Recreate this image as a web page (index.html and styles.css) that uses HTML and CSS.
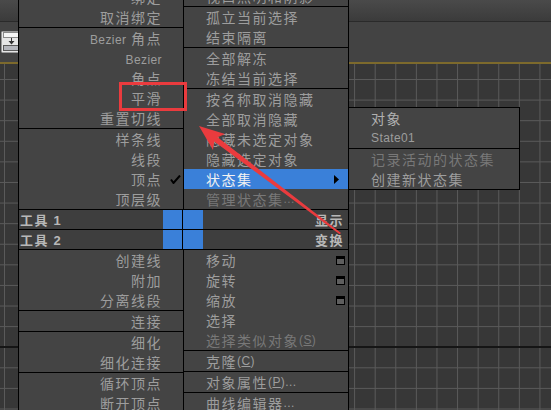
FILE: index.html
```html
<!DOCTYPE html>
<html lang="zh-CN">
<head>
<meta charset="UTF-8">
<meta name="viewport" content="width=device-width, initial-scale=1.0">
<title>四元菜单</title>
<link rel="stylesheet" href="styles.css">
</head>
<body>
  <!-- 视口背景 -->
  <div class="viewport">
    <div class="toolbar"></div>
    <div class="panel">
      <svg class="drop-icon" width="20" height="22" viewBox="0 0 20 22">
        <rect x="0.5" y="0.5" width="19" height="21" rx="1" fill="#e6e6e6" stroke="#9a9a9a"/>
        <rect x="2.5" y="1.5" width="16" height="5" fill="#f6f6f6" stroke="#8a8a8a"/>
        <rect x="2.5" y="14.5" width="16" height="5" fill="#b4b6bc" stroke="#5a5a5a"/>
        <rect x="10" y="7" width="1" height="4" fill="#333"/>
        <polygon points="7.5,10 13.5,10 10.5,13.5" fill="#333"/>
      </svg>
    </div>
    <div class="gold"></div>
    <div class="grid"></div>
  </div>

  <!-- 四元菜单 -->
  <div class="quad">
    <div class="quad-top">
      <div class="col col-left">
        <div class="group">
          <div class="item"><span class="txt">绑定</span><span class="slot"></span></div>
          <div class="item"><span class="txt">取消绑定</span><span class="slot"></span></div>
        </div>
        <div class="group">
          <div class="item"><span class="txt"><span class="lat">Bezier</span> 角点</span><span class="slot"></span></div>
          <div class="item"><span class="txt"><span class="lat">Bezier</span></span><span class="slot"></span></div>
          <div class="item"><span class="txt">角点</span><span class="slot"></span></div>
          <div class="item"><span class="txt">平滑</span><span class="slot"></span></div>
          <div class="item"><span class="txt">重置切线</span><span class="slot"></span></div>
        </div>
        <div class="group">
          <div class="item"><span class="txt">样条线</span><span class="slot"></span></div>
          <div class="item"><span class="txt">线段</span><span class="slot"></span></div>
          <div class="item">
            <span class="txt">顶点</span>
            <span class="slot">
              <svg class="check" width="11" height="9" viewBox="0 0 11 9"><path d="M1 4.5 L3.5 8 L10 0.5" fill="none" stroke="#000" stroke-width="2"/></svg>
            </span>
          </div>
          <div class="item"><span class="txt">顶层级</span><span class="slot"></span></div>
        </div>
      </div>
      <div class="col col-right">
        <div class="group">
          <div class="item">视口照明和阴影</div>
        </div>
        <div class="group">
          <div class="item">孤立当前选择</div>
          <div class="item">结束隔离</div>
        </div>
        <div class="group">
          <div class="item">全部解冻</div>
          <div class="item">冻结当前选择</div>
        </div>
        <div class="group">
          <div class="item">按名称取消隐藏</div>
          <div class="item">全部取消隐藏</div>
          <div class="item">隐藏未选定对象</div>
          <div class="item">隐藏选定对象</div>
          <div class="item active">状态集
            <svg class="sub-arrow" width="5" height="9" viewBox="0 0 5 9"><polygon points="0,0 5,4.5 0,9" fill="#000"/></svg>
          </div>
          <div class="item dim">管理状态集<span class="lat">...</span></div>
        </div>
      </div>
    </div>

    <div class="title-row">
      <div class="title-left"><span class="title-text">工具 <span class="lat">1</span></span><span class="blue"></span></div>
      <div class="title-right"><span class="blue"></span><span class="title-text">显示</span></div>
    </div>
    <div class="title-row last">
      <div class="title-left"><span class="title-text">工具 <span class="lat">2</span></span><span class="blue"></span></div>
      <div class="title-right"><span class="blue"></span><span class="title-text">变换</span></div>
    </div>

    <div class="quad-bottom">
      <div class="col col-left">
        <div class="group">
          <div class="item"><span class="txt">创建线</span><span class="slot"></span></div>
          <div class="item"><span class="txt">附加</span><span class="slot"></span></div>
          <div class="item"><span class="txt">分离线段</span><span class="slot"></span></div>
        </div>
        <div class="group">
          <div class="item"><span class="txt">连接</span><span class="slot"></span></div>
        </div>
        <div class="group">
          <div class="item"><span class="txt">细化</span><span class="slot"></span></div>
          <div class="item"><span class="txt">细化连接</span><span class="slot"></span></div>
        </div>
        <div class="group">
          <div class="item"><span class="txt">循环顶点</span><span class="slot"></span></div>
          <div class="item"><span class="txt">断开顶点</span><span class="slot"></span></div>
        </div>
      </div>
      <div class="col col-right">
        <div class="group">
          <div class="item">移动<span class="win"></span></div>
          <div class="item">旋转<span class="win"></span></div>
          <div class="item">缩放<span class="win"></span></div>
          <div class="item">选择</div>
          <div class="item dim">选择类似对象<span class="lat">(<u>S</u>)</span></div>
        </div>
        <div class="group">
          <div class="item">克隆<span class="lat">(<u>C</u>)</span></div>
        </div>
        <div class="group">
          <div class="item">对象属性<span class="lat">(<u>P</u>)...</span></div>
        </div>
        <div class="group">
          <div class="item">曲线编辑器<span class="lat">...</span></div>
        </div>
      </div>
    </div>
  </div>

  <!-- 状态集子菜单 -->
  <div class="submenu">
    <div class="group">
      <div class="item light">对象</div>
      <div class="item"><span class="lat">State01</span></div>
    </div>
    <div class="group">
      <div class="item dim">记录活动的状态集</div>
      <div class="item">创建新状态集</div>
    </div>
  </div>

  <!-- 标注 -->
  <svg class="marks" width="551" height="410" viewBox="0 0 551 410">
    <rect x="120.5" y="83.5" width="65" height="26" fill="none" stroke="#ea3b3e" stroke-width="3"/>
    <polygon points="199,126 225,134 217.6,137.2 341,233 339.6,234.2 214.2,141.4 213,150" fill="#ea3b3e"/>
  </svg>
</body>
</html>
```

FILE: styles.css
```css
body {
margin: 0;
width: 551px;
height: 410px;
overflow: hidden;
position: relative;
background-color: #383838;
font-family: "Noto Sans CJK SC", sans-serif;
}

.viewport {
display: flex;
flex-direction: column;
height: 410px;
}

.toolbar {
height: 21px;
background: linear-gradient(#4a4a4a, #3b3b3b);
border-bottom: 1px solid #2a2a2a;
}

.panel {
height: 40px;
padding: 9px 0 0 1px;
box-sizing: border-box;
background-color: #434343;
}

.drop-icon {
display: block;
}

.gold {
height: 2px;
background-color: #7d6a2c;
}

.grid {
flex: 1;
background-color: #373737;
background-image:
  linear-gradient(#151515, #151515),
  linear-gradient(to right, #5a5a5a 1px, transparent 1px),
  linear-gradient(#5a5a5a 1px, transparent 1px);
background-size: 100% 2px, 20.6px 20.6px, 20.6px 20.6px;
background-position: 0 282px, 4px 0, 0 15px;
background-repeat: no-repeat, repeat, repeat;
}

/* quad menu */
.quad {
position: absolute;
left: 18px;
top: 0;
width: 329px;
border-left: 1px solid #000;
border-right: 1px solid #000;
background-color: #444;
color: #9d9d9d;
font-size: 14px;
letter-spacing: 1.5px;
}

.quad-top {
display: flex;
align-items: flex-end;
height: 209px;
overflow: hidden;
}

.quad-bottom {
display: flex;
align-items: flex-start;
}

.col {
width: 164px;
flex-shrink: 0;
}

.col-left {
border-right: 1px solid #000;
}

.group {
border-top: 1px solid #000;
}

.quad-bottom .group:first-child {
border-top: 0;
}

.item {
height: 20px;
display: flex;
align-items: center;
white-space: nowrap;
}

.col-left .item {
justify-content: flex-end;
}

.slot {
width: 21px;
height: 20px;
display: flex;
align-items: center;
flex-shrink: 0;
}

.check {
margin: 1px 0 0 8px;
}

.col-right .item {
padding: 0 3px 0 22px;
}

.item.active {
background-color: #3a80d9;
color: #f2f2f2;
}

.sub-arrow {
margin-left: auto;
margin-right: 6px;
}

.win {
margin-left: auto;
width: 7px;
height: 5px;
border: 1px solid #000;
border-top-width: 3px;
background-color: #5e5e5e;
}

.dim {
color: #787878;
}

.light {
color: #b0b0b0;
}

.lat {
font-family: "Liberation Sans", sans-serif;
font-size: 12px;
letter-spacing: 0.4px;
}

.title-row {
display: flex;
height: 19px;
border-top: 1px solid #000;
background-color: #3e3e3e;
color: #b8b8b8;
font-weight: bold;
font-size: 13px;
}

.title-row.last {
border-bottom: 1px solid #000;
}

.title-left {
width: 164px;
display: flex;
align-items: center;
padding-left: 1px;
box-sizing: border-box;
border-right: 1px solid #000;
}

.title-right {
width: 164px;
display: flex;
align-items: center;
}

.title-left .blue {
margin-left: auto;
}

.title-right .title-text {
margin-left: auto;
margin-right: 3px;
}

.title-row .lat {
font-size: 13px;
font-weight: bold;
}

.blue {
width: 19px;
height: 19px;
background-color: #3a80d9;
}

.title-right .blue {
width: 20px;
}

/* sub menu */
.submenu {
position: absolute;
left: 348px;
top: 107px;
width: 170px;
border: 1px solid #000;
border-top: 0;
background-color: #444;
color: #9d9d9d;
font-size: 14px;
letter-spacing: 1.5px;
}

.submenu .item {
padding-left: 22px;
}

.marks {
position: absolute;
left: 0;
top: 0;
pointer-events: none;
}
```
